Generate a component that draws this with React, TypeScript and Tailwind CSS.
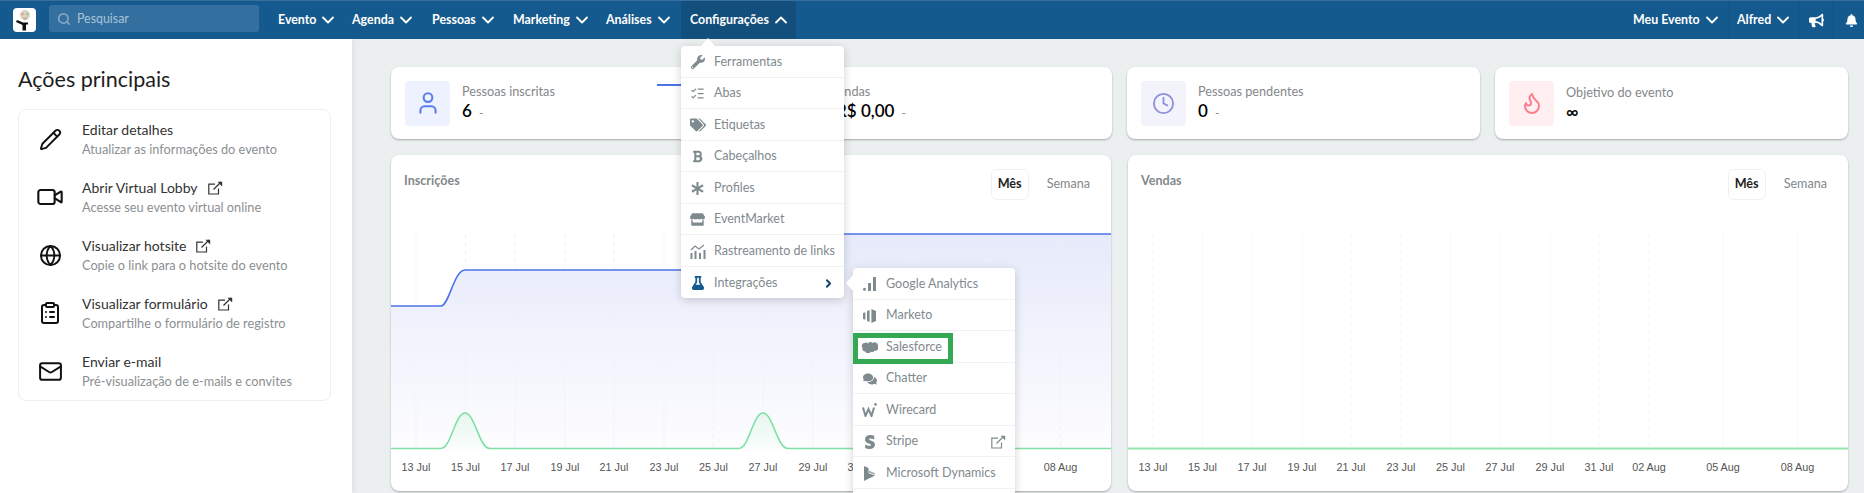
import { useId, type ReactNode } from 'react';
import {
  ChevronDown,
  ChevronRight,
  ChevronUp,
  Clock,
  Flame,
  Globe,
  Mail,
  Pencil,
  Search,
  User,
  Video,
  ClipboardList,
  ListChecks,
} from 'lucide-react';
import {
  FaAsterisk,
  FaBell,
  FaBold,
  FaBullhorn,
  FaComments,
  FaFlask,
  FaStore,
  FaStripeS,
  FaTags,
  FaWrench,
} from 'react-icons/fa';

const NAV_ITEMS = [
  { label: 'Evento', width: 'w-[74px]' },
  { label: 'Agenda', width: 'w-[80px]' },
  { label: 'Pessoas', width: 'w-[81px]' },
  { label: 'Marketing', width: 'w-[93px]' },
  { label: 'Análises', width: 'w-[83px]' },
];

const ACTIONS = [
  { icon: <Pencil size={23} strokeWidth={2} />, title: 'Editar detalhes', text: 'Atualizar as informações do evento' },
  { icon: <Video size={28} strokeWidth={1.8} />, title: 'Abrir Virtual Lobby', text: 'Acesse seu evento virtual online', external: true },
  { icon: <Globe size={23} strokeWidth={2} />, title: 'Visualizar hotsite', text: 'Copie o link para o hotsite do evento', external: true },
  { icon: <ClipboardList size={24} strokeWidth={2} />, title: 'Visualizar formulário', text: 'Compartilhe o formulário de registro', external: true },
  { icon: <Mail size={25} strokeWidth={1.9} />, title: 'Enviar e-mail', text: 'Pré-visualização de e-mails e convites' },
];

const X_TICKS = [
  ['13 Jul', 25],
  ['15 Jul', 74.5],
  ['17 Jul', 124],
  ['19 Jul', 174],
  ['21 Jul', 223],
  ['23 Jul', 273],
  ['25 Jul', 322.5],
  ['27 Jul', 372],
  ['29 Jul', 422],
  ['31 Jul', 471],
  ['02 Aug', 521],
  ['05 Aug', 595],
  ['08 Aug', 669.5],
] as const;

function ExternalIcon({ className }: { className?: string }) {
  return (
    <svg width="15" height="14" viewBox="0 0 15 14" fill="none" stroke="currentColor" strokeWidth="1.2" className={className}>
      <path d="M10.5 7.5V13H.8V3.2H7" />
      <path d="M5.5 8.5L13 1" />
      <path d="M9.5.8h4.7v4.7z" fill="currentColor" stroke="none" />
    </svg>
  );
}

function TrackingIcon() {
  return (
    <svg width="16" height="15" viewBox="0 0 16 15" fill="currentColor">
      <rect x="0.5" y="9" width="2" height="6" />
      <rect x="4.5" y="7" width="2" height="8" />
      <rect x="9" y="9" width="2" height="6" />
      <rect x="13.5" y="6" width="2" height="9" />
      <path d="M1 6l4-4 4 3 5-4" fill="none" stroke="currentColor" strokeWidth="1.2" />
    </svg>
  );
}

function AnalyticsIcon() {
  return (
    <svg width="13" height="14" viewBox="0 0 13 14" fill="currentColor">
      <circle cx="1.5" cy="12.2" r="1.5" />
      <rect x="5" y="6" width="3" height="8" rx="0.5" />
      <rect x="10" y="0" width="3" height="14" rx="0.5" />
    </svg>
  );
}

function MarketoIcon() {
  return (
    <svg width="13" height="14" viewBox="0 0 13 14" fill="currentColor">
      <path d="M0 4l2.4-.8v7.6L0 10z" />
      <path d="M4 2l2.6-1v12L4 12z" />
      <path d="M8.4 0L13 2v10l-4.6 2z" />
    </svg>
  );
}

function SalesforceIcon() {
  return (
    <svg width="17" height="11" viewBox="0 0 17 11" fill="currentColor">
      <path d="M7 1.4A3 3 0 0 1 11.6 1a3.4 3.4 0 0 1 5.4 3 3.2 3.2 0 0 1-3.6 4.7 2.6 2.6 0 0 1-3.6 1A3 3 0 0 1 4.4 9.5 2.6 2.6 0 0 1 1.6 6 2.9 2.9 0 0 1 3.4 1 3 3 0 0 1 7 1.4z" />
    </svg>
  );
}

function WirecardIcon() {
  return (
    <svg width="15" height="14" viewBox="0 0 15 14" fill="none" stroke="currentColor" strokeWidth="2">
      <path d="M1 4.5l2.5 8.5 3-7 3 7 2.5-8.5" />
      <circle cx="13.5" cy="1.4" r="1.3" fill="currentColor" stroke="none" />
    </svg>
  );
}

function DynamicsIcon() {
  return (
    <svg width="11" height="15" viewBox="0 0 11 15" fill="currentColor">
      <path d="M0 0l4.5 2v5.2L11 9.5 0 15z" />
      <path d="M4.8 4.6L11 7.2v1.6L4.8 6.8z" opacity="0.7" />
    </svg>
  );
}

function Logo() {
  return (
    <svg width="23" height="24" viewBox="0 0 23 24" className="shrink-0">
      <rect width="23" height="24" rx="4" fill="#fff" />
      <circle cx="12" cy="7" r="5" fill="#ddd3c4" />
      <circle cx="9.5" cy="6" r="1.6" fill="#e2a9a0" />
      <circle cx="14.5" cy="6" r="1.6" fill="#a9c9a4" />
      <path d="M12 12.5l-3-3h6z" fill="#c9b08f" />
      <path d="M3 14l1-2 6 2.5h5v2h-2v6H9.5v-5.5z" fill="#111" />
    </svg>
  );
}

function NavDivider() {
  return <span className="h-full w-px bg-[#1b5280]" />;
}

function TopBar() {
  return (
    <header className="relative z-20 flex h-[39px] items-stretch border-t border-t-[#37709c] bg-[#155a8e] text-[12.4px] font-bold text-white">
      <div className="flex w-[49px] items-center pl-[13px]">
        <Logo />
      </div>
      <label className="mt-1 flex h-[27px] w-[210px] items-center gap-1.5 rounded-[3px] bg-[#33709f] px-2 pt-px text-[12.4px] font-normal text-[#a9c3d8]">
        <Search size={14} strokeWidth={3} className="text-[#83a7c4]" />
        Pesquisar
      </label>
      <nav className="ml-[19px] flex items-stretch">
        {NAV_ITEMS.map((item) => (
          <span key={item.label} className={`flex items-center gap-0.5 ${item.width}`}>
            {item.label}
            <ChevronDown size={20} strokeWidth={2.2} />
          </span>
        ))}
        <span className="-ml-[8px] flex w-[115px] items-center gap-0.5 bg-[#124f7d] pl-[9px]">
          Configurações
          <ChevronUp size={20} strokeWidth={2.2} />
        </span>
      </nav>
      <div className="ml-auto flex items-stretch">
        <span className="flex w-[95px] items-center gap-0.5">
          Meu Evento
          <ChevronDown size={20} strokeWidth={2.2} />
        </span>
        <NavDivider />
        <span className="flex w-[70px] items-center gap-0.5 pl-[8px]">
          Alfred
          <ChevronDown size={20} strokeWidth={2.2} />
        </span>
        <NavDivider />
        <span className="flex w-[32px] items-center justify-center">
          <FaBullhorn size={15} />
        </span>
        <NavDivider />
        <span className="flex w-[31px] items-center justify-center pl-[6px]">
          <FaBell size={13} />
        </span>
      </div>
    </header>
  );
}

function Sidebar() {
  return (
    <aside className="relative z-10 w-[352px] shrink-0 bg-white px-[18px] pt-[25px] shadow-[2px_0_6px_rgba(0,0,0,0.06)]">
      <h2 className="h-[45px] text-[21.5px] leading-[30px] font-normal text-[#1d1d1d]">Ações principais</h2>
      <div className="w-[313px] rounded-lg border border-[#eceeef]">
        {ACTIONS.map((action) => (
          <div key={action.title} className="flex h-[58px] items-center">
            <span className="flex w-[58px] shrink-0 items-center justify-center pl-[4px] text-[#111]">
              {action.icon}
            </span>
            <div className="ml-[5px]">
              <div className="flex items-center gap-2 text-[14px] leading-5 text-[#333]">
                {action.title}
                {action.external && <ExternalIcon className="ml-0.5" />}
              </div>
              <div className="text-[12.75px] leading-[19px] text-[#8b8f92]">{action.text}</div>
            </div>
          </div>
        ))}
      </div>
    </aside>
  );
}

function StatCard({
  icon,
  tint,
  label,
  value,
  valueClass,
  dash = true,
  children,
}: {
  icon: ReactNode;
  tint: string;
  label: string;
  value: string;
  valueClass?: string;
  dash?: boolean;
  children?: ReactNode;
}) {
  return (
    <div className="relative flex h-[72px] items-center gap-3 rounded-lg bg-white pl-[14px] shadow-[0_1px_2px_rgba(0,0,0,0.3)]">
      <span className={`flex size-[45px] items-center justify-center rounded ${tint}`}>{icon}</span>
      <div>
        <div className="text-[12.7px] leading-[18px] text-[#84888b]">{label}</div>
        <div className={`text-[17px] leading-[22px] font-semibold text-black ${valueClass ?? ''}`}>
          {value}
          {dash && <span className="ml-1 text-[12px] font-normal text-[#888]"> -</span>}
        </div>
      </div>
      {children}
    </div>
  );
}

function Chart({ filled }: { filled?: boolean }) {
  const id = useId();
  const gradientId = `area-${id}`;
  const greenGradientId = `green-${id}`;
  return (
    <svg width="100%" height="286" viewBox="0 0 720 286" className="block">
      <defs>
        <linearGradient id={gradientId} x1="0" y1="0" x2="0" y2="1">
          <stop offset="0" stopColor="#e6eafa" />
          <stop offset="1" stopColor="#fdfdff" />
        </linearGradient>
        <linearGradient id={greenGradientId} x1="0" y1="0" x2="0" y2="1">
          <stop offset="0" stopColor="#e6f7ee" />
          <stop offset="1" stopColor="#fafdfc" />
        </linearGradient>
      </defs>
      {filled && (
        <path
          d="M0 101H50C58 101 63 65 74 65H347C355 65 361 29 372 29H720V244H0Z"
          fill={`url(#${gradientId})`}
        />
      )}
      {X_TICKS.map(([label, x]) => (
        <line
          key={label}
          x1={x}
          x2={x}
          y1="30"
          y2="244"
          stroke={filled ? '#edeff6' : '#f3f4f5'}
          strokeWidth="1"
          strokeDasharray="4 4"
        />
      ))}
      {filled && (
        <>
          <path
            d="M0 101H50C58 101 63 65 74 65H347C355 65 361 29 372 29H720"
            fill="none"
            stroke="#4c73e6"
            strokeWidth="1.6"
          />
          <path
            d="M50 244C60 244 64 208 74 208C84 208 88 244 99 244ZM348 244C358 244 362 208 372 208C382 208 386 244 397 244Z"
            fill={`url(#${greenGradientId})`}
          />
          <path
            d="M0 243.5H50C60 243.5 64 208 74 208C84 208 88 243.5 99 243.5H348C358 243.5 362 208 372 208C382 208 386 243.5 397 243.5H720"
            fill="none"
            stroke="#7fe0a3"
            strokeWidth="1.6"
          />
        </>
      )}
      {!filled && <line x1="0" x2="720" y1="243.5" y2="243.5" stroke="#94e4ad" strokeWidth="2" />}
      {X_TICKS.map(([label, x]) => (
        <text
          key={label}
          x={x}
          y="266"
          textAnchor="middle"
          fontFamily="'Liberation Sans', Arial, sans-serif"
          fontSize="10.8"
          fill="#555"
        >
          {label}
        </text>
      ))}
    </svg>
  );
}

function ChartCard({ title, filled }: { title: string; filled?: boolean }) {
  return (
    <div className="flex h-[336px] flex-col overflow-hidden rounded-lg bg-white shadow-[0_1px_2px_rgba(0,0,0,0.3)]">
      <div className="flex h-[50px] shrink-0 items-start justify-between pt-[14px] pr-[21px] pl-[13px]">
        <h3 className="mt-[2px] text-[12.6px] leading-5 font-bold text-[#84888b]">{title}</h3>
        <div className="flex h-[31px] items-center gap-[18px] text-[12.6px] text-[#84888b]">
          <span className="flex h-[31px] w-[38px] items-center justify-center rounded-md border border-[#f0f1f2] font-bold text-[#222]">
            Mês
          </span>
          <span>Semana</span>
        </div>
      </div>
      <Chart filled={filled} />
    </div>
  );
}

function Dashboard() {
  return (
    <main className="flex-1 bg-[#eceff0] pt-[28px] pr-[16px] pl-[39px]">
      <div className="grid grid-cols-4 gap-x-[15px]">
        <StatCard
          icon={<User size={26} strokeWidth={1.9} className="text-[#5b7cf0]" />}
          tint="bg-[#eef2ff]"
          label="Pessoas inscritas"
          value="6"
        >
          <span className="absolute top-[17px] right-[40px] left-[266px] h-[2px] bg-[#4c73e6]" />
        </StatCard>
        <StatCard
          icon={<FaTags size={20} className="text-[#7ad29b]" />}
          tint="bg-[#eafaf1]"
          label="Vendas"
          value="R$ 0,00"
          valueClass="pl-[6px]"
        />
        <StatCard
          icon={<Clock size={23} strokeWidth={1.9} className="text-[#8e8fd9]" />}
          tint="bg-[#f3f4fb]"
          label="Pessoas pendentes"
          value="0"
        />
        <StatCard
          icon={<Flame size={24} strokeWidth={2} className="text-[#f9808c]" />}
          tint="bg-[#ffeff0]"
          label="Objetivo do evento"
          value="∞"
          dash={false}
        />
      </div>
      <div className="mt-4 grid grid-cols-[720px_720px] gap-x-[17px]">
        <ChartCard title="Inscrições" filled />
        <ChartCard title="Vendas" />
      </div>
    </main>
  );
}

function MenuRow({
  icon,
  label,
  active,
  trailing,
}: {
  icon: ReactNode;
  label: string;
  active?: boolean;
  trailing?: ReactNode;
}) {
  return (
    <div className="flex h-[31.5px] items-center border-b border-[#f0f2f3] pt-[2px] pr-[9px] last:border-b-0">
      <span className={`flex w-[33px] shrink-0 justify-center ${active ? 'text-[#155a8e]' : 'text-[#7f8a8e]'}`}>
        {icon}
      </span>
      <span className="text-[12.5px] whitespace-nowrap text-[#7f8a8e]">{label}</span>
      {trailing && <span className="ml-auto">{trailing}</span>}
    </div>
  );
}

function SettingsMenu() {
  return (
    <div className="absolute top-[46px] left-[681px] z-30 w-[163px] rounded bg-white shadow-[0_2px_10px_rgba(0,0,0,0.18)]">
      <span className="absolute -top-[8px] left-[20px] size-0 border-x-[7px] border-b-[8px] border-x-transparent border-b-white" />
      <MenuRow icon={<FaWrench size={14} />} label="Ferramentas" />
      <MenuRow icon={<ListChecks size={15} strokeWidth={2} />} label="Abas" />
      <MenuRow icon={<FaTags size={16} />} label="Etiquetas" />
      <MenuRow icon={<FaBold size={13} />} label="Cabeçalhos" />
      <MenuRow icon={<FaAsterisk size={13} />} label="Profiles" />
      <MenuRow icon={<FaStore size={15} />} label="EventMarket" />
      <MenuRow icon={<TrackingIcon />} label="Rastreamento de links" />
      <MenuRow
        icon={<FaFlask size={14} />}
        label="Integrações"
        active
        trailing={<ChevronRight size={13} strokeWidth={3.4} className="text-[#123f6b]" />}
      />
    </div>
  );
}

function IntegrationsMenu() {
  return (
    <div className="absolute top-[268px] left-[853px] z-30 h-[240px] w-[162px] rounded-t bg-white shadow-[0_2px_10px_rgba(0,0,0,0.18)]">
      <span className="absolute top-[7px] -left-[7px] size-0 border-y-[8px] border-r-[7px] border-y-transparent border-r-white" />
      <MenuRow icon={<AnalyticsIcon />} label="Google Analytics" />
      <MenuRow icon={<MarketoIcon />} label="Marketo" />
      <MenuRow icon={<SalesforceIcon />} label="Salesforce" />
      <MenuRow icon={<FaComments size={14} />} label="Chatter" />
      <MenuRow icon={<WirecardIcon />} label="Wirecard" />
      <MenuRow
        icon={<FaStripeS size={14} />}
        label="Stripe"
        trailing={<ExternalIcon className="text-[#7f8a8e]" />}
      />
      <MenuRow icon={<DynamicsIcon />} label="Microsoft Dynamics" />
      <div className="pointer-events-none absolute top-[65px] left-0 h-[31px] w-[100px] border-[5px] border-[#34a853]" />
    </div>
  );
}

export default function App() {
  return (
    <div className="relative h-[493px] w-[1864px] overflow-hidden bg-white font-['Lato','Noto_Sans',sans-serif]">
      <TopBar />
      <div className="flex h-[454px]">
        <Sidebar />
        <Dashboard />
      </div>
      <SettingsMenu />
      <IntegrationsMenu />
    </div>
  );
}
